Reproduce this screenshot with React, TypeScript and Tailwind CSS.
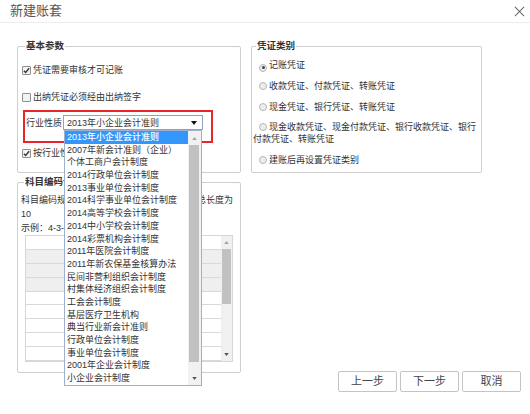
import React from 'react'

const industries = [
  '2013年小企业会计准则',
  '2007年新会计准则（企业）',
  '个体工商户会计制度',
  '2014行政单位会计制度',
  '2013事业单位会计制度',
  '2014科学事业单位会计制度',
  '2014高等学校会计制度',
  '2014中小学校会计制度',
  '2014彩票机构会计制度',
  '2011年医院会计制度',
  '2011年新农保基金核算办法',
  '民间非营利组织会计制度',
  '村集体经济组织会计制度',
  '工会会计制度',
  '基层医疗卫生机构',
  '典当行业新会计准则',
  '行政单位会计制度',
  '事业单位会计制度',
  '2001年企业会计制度',
  '小企业会计制度',
]

function CheckBox({ checked }: { checked?: boolean }) {
  return (
    <span className="flex h-[9px] w-[9px] shrink-0 items-center justify-center rounded-[1px] border border-[#8f8f8f] bg-[#f3f3f3]">
      {checked && (
        <svg viewBox="0 0 8 8" className="h-[7px] w-[7px]">
          <path d="M1 4.3 L3 6.3 L7 1.4" fill="none" stroke="#333" strokeWidth="1.5" />
        </svg>
      )}
    </span>
  )
}

function Radio({ checked }: { checked?: boolean }) {
  return (
    <span className="ml-[6px] mr-[2px] inline-flex h-[8px] w-[8px] items-center justify-center rounded-full border border-[#b8b8b8] bg-[#ececec] align-[-1px]">
      {checked && <span className="h-[3px] w-[3px] rounded-full bg-[#444]" />}
    </span>
  )
}

function Legend({ children }: { children: React.ReactNode }) {
  return (
    <legend className="ml-[3px] px-[1px] text-[9.5px] leading-[12px] font-bold text-[#333]">{children}</legend>
  )
}

export default function App() {
  return (
    <div className="relative h-[414px] w-[530px] overflow-hidden bg-white font-['Liberation_Sans','Noto_Sans_CJK_SC',sans-serif] text-[9px] leading-[12px] text-[#333]">
      {/* header */}
      <div className="flex h-[23px] items-center justify-between border-b border-[#ececec] pl-[10px] pr-[5px]">
        <span className="text-[13px] leading-[16px] text-[#555]">新建账套</span>
        <svg viewBox="0 0 12 12" className="h-[11px] w-[11px]">
          <path d="M1 1 L11 11 M11 1 L1 11" stroke="#666" strokeWidth="1.1" />
        </svg>
      </div>

      <div className="flex gap-[10px] pl-[17px] pt-[17px]">
        {/* left column */}
        <div className="flex w-[224px] flex-col">
          <fieldset className="h-[133px] rounded-[2px] border border-[#cfcfcf] pl-[4px]">
            <Legend>基本参数</Legend>
            <div className="mt-[11px] flex h-[14px] items-center gap-[2px]">
              <CheckBox checked />
              <span>凭证需要审核才可记账</span>
            </div>
            <div className="mt-[13px] flex h-[14px] items-center gap-[2px]">
              <CheckBox />
              <span>出纳凭证必须经由出纳签字</span>
            </div>
            <div className="ml-[1px] mt-[6px] h-[33px] w-[190px] border-2 border-[#e8262a] pl-[1px] pt-[3px]">
              <div className="flex items-center gap-[1px]">
                <span className="w-[36px]">行业性质</span>
                <div className="relative z-10 flex h-[15px] w-[140px] items-center justify-between border border-[#8ba3cc] bg-white pl-[3px] pr-[5px]">
                  <span>2013年小企业会计准则</span>
                  <svg viewBox="0 0 6 4" className="h-[4px] w-[6px]">
                    <path d="M0 0 H6 L3 4 Z" fill="#111" />
                  </svg>
                  {/* open dropdown list */}
                  <div className="absolute left-0 top-[14px] flex h-[256px] w-[138px] border border-[#9fb0cf] bg-white">
                    <div className="flex flex-1 flex-col">
                      {industries.map((name, i) => (
                        <div
                          key={name}
                          className={
                            i === 0
                              ? 'h-[12.7px] whitespace-nowrap bg-[#3296fa] pl-[2px] leading-[12.7px] font-medium text-white'
                              : 'h-[12.7px] whitespace-nowrap pl-[2px] leading-[12.7px] text-[#333]'
                          }
                        >
                          {name}
                        </div>
                      ))}
                    </div>
                    <div className="flex w-[13px] flex-col items-center bg-[#f1f1f1]">
                      <div className="flex h-[14px] items-center">
                        <svg viewBox="0 0 6 4" className="h-[3px] w-[5px]">
                          <path d="M0 4 H6 L3 0 Z" fill="#a3a3a3" />
                        </svg>
                      </div>
                      <div className="ml-[-1px] h-[217px] w-[10px] bg-[#c1c1c1]" />
                      <div className="flex flex-1 items-end pb-[5px]">
                        <svg viewBox="0 0 6 4" className="h-[3px] w-[5px]">
                          <path d="M0 0 H6 L3 4 Z" fill="#555" />
                        </svg>
                      </div>
                    </div>
                  </div>
                </div>
              </div>
            </div>
            <div className="mt-[3px] flex h-[14px] items-center gap-[2px]">
              <CheckBox checked />
              <span>按行业性质预置科目</span>
            </div>
          </fieldset>

          <fieldset className="mt-[3px] h-[197px] rounded-[2px] border border-[#cfcfcf] pl-[3px]">
            <Legend>科目编码设置</Legend>
            <div className="mt-[5px] leading-[14px]">
              <div className="whitespace-nowrap">科目编码规则：4-3-3-3-3-3，最大级数6级，总长度为</div>
              <div>10</div>
              <div className="whitespace-nowrap">示例：4-3-3-3-3-3</div>
            </div>
            <div className="ml-[4px] flex h-[127px] w-[208px] border border-[#d6d6d6]">
              <div className="flex flex-1 flex-col">
                {[0, 1, 2, 3, 4, 5, 6, 7, 8].map((r) => (
                  <div
                    key={r}
                    className={
                      r >= 1 && r <= 3
                        ? 'h-[14.2px] border-b border-[#d9d9d9] bg-[#efefef]'
                        : 'h-[14.2px] border-b border-[#d9d9d9] bg-white'
                    }
                  />
                ))}
              </div>
              <div className="flex w-[11px] flex-col items-center bg-[#f0f0f0]">
                <div className="flex h-[13px] items-center">
                  <svg viewBox="0 0 6 4" className="h-[3px] w-[5px]">
                    <path d="M0 4 H6 L3 0 Z" fill="#a3a3a3" />
                  </svg>
                </div>
                <div className="h-[55px] w-[9px] bg-[#c1c1c1]" />
                <div className="flex flex-1 items-end pb-[5px]">
                  <svg viewBox="0 0 6 4" className="h-[3px] w-[5px]">
                    <path d="M0 0 H6 L3 4 Z" fill="#555" />
                  </svg>
                </div>
              </div>
            </div>
          </fieldset>
        </div>

        {/* right column */}
        <div className="flex w-[270px] flex-col">
          <fieldset className="h-[133px] w-[231px] rounded-[2px] border border-[#cfcfcf] pl-[1px] pr-[2px]">
            <Legend>凭证类别</Legend>
            <div className="mt-[7px] flex flex-col gap-[8.5px]">
              <div>
                <Radio checked />
                记账凭证
              </div>
              <div>
                <Radio />
                收款凭证、付款凭证、转账凭证
              </div>
              <div>
                <Radio />
                现金凭证、银行凭证、转账凭证
              </div>
              <div>
                <Radio />
                现金收款凭证、现金付款凭证、银行收款凭证、银行付款凭证、转账凭证
              </div>
              <div>
                <Radio />
                建账后再设置凭证类别
              </div>
            </div>
          </fieldset>

          <div className="mt-[198px] flex justify-end gap-[3px]">
            {['上一步', '下一步', '取消'].map((label) => (
              <button
                key={label}
                className="h-[21px] w-[59px] rounded-[2px] border border-[#c4c4c4] bg-white text-[11px] leading-[19px] text-[#444]"
              >
                {label}
              </button>
            ))}
          </div>
        </div>
      </div>
    </div>
  )
}
